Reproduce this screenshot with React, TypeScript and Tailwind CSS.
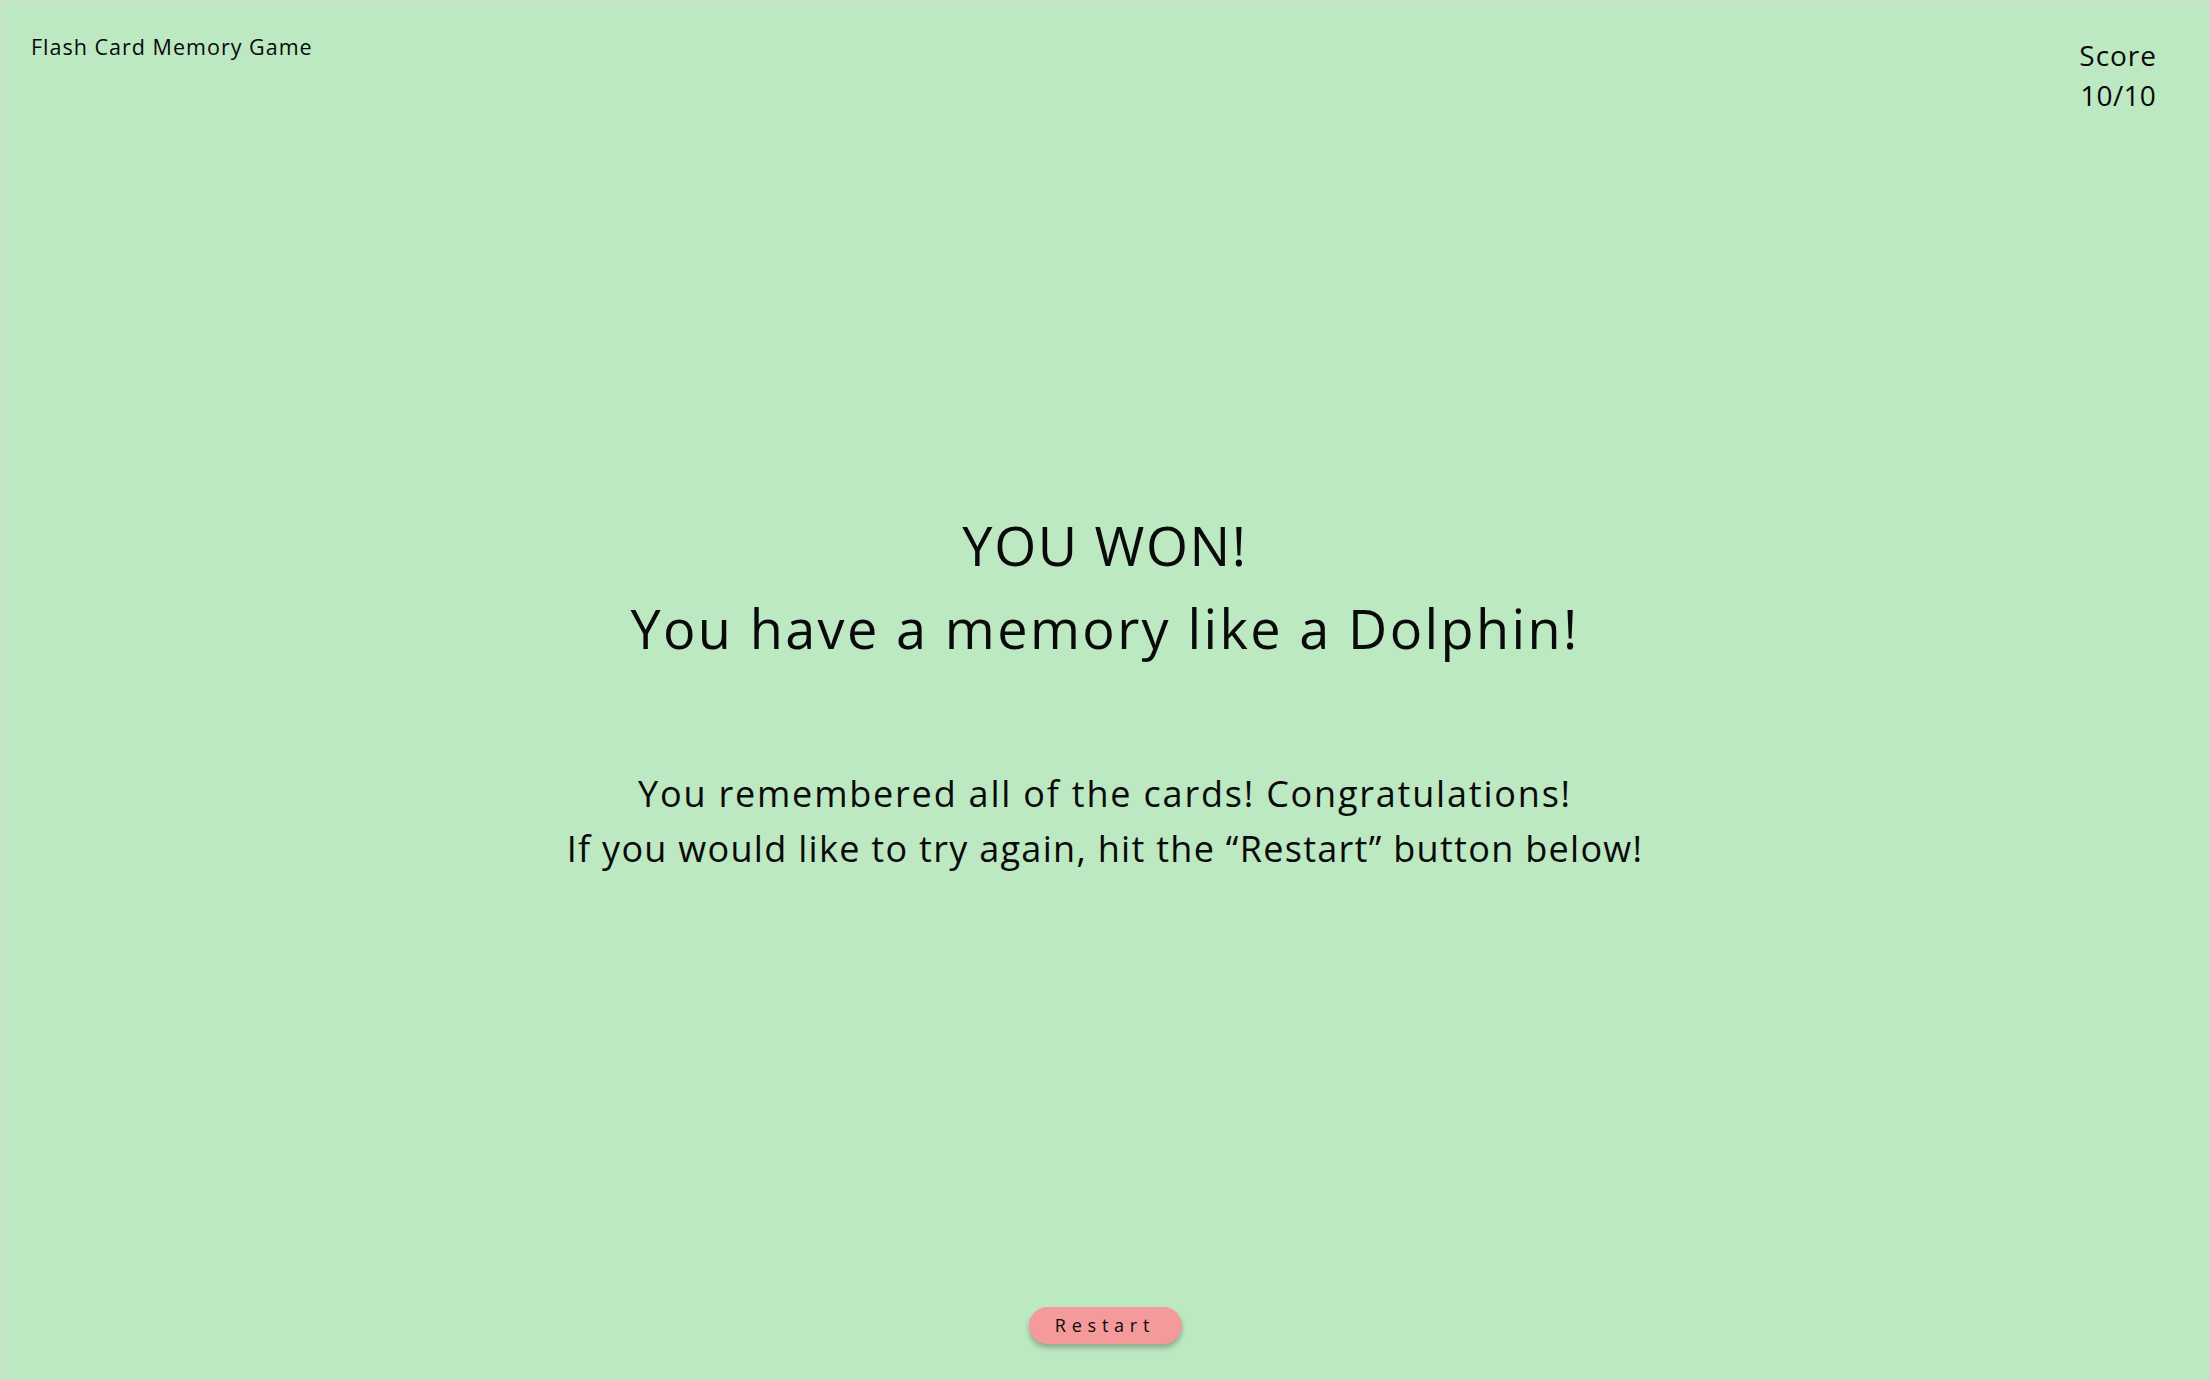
export default function App() {
  return (
    <div
      className="flex h-screen flex-col border border-[#d3dbd4] bg-[#bce8c2] text-[#0a0a0a]"
      style={{ fontFamily: '"Open Sans", "Liberation Sans", sans-serif' }}
    >
      <header className="flex items-start justify-between pl-[30px] pr-[52px] pt-[30px]">
        <h1 className="text-[21.5px] leading-[32px] tracking-[0.047em]">Flash Card Memory Game</h1>
        <div className="pt-[4px] text-center text-[28px] leading-[40px]">
          <div className="tracking-[0.035em]">Score</div>
          <div className="tracking-[0.01em]">10/10</div>
        </div>
      </header>

      <main className="flex flex-1 flex-col items-center justify-center pb-[42px] text-center">
        <h2 className="text-[54px] leading-[83px] tracking-[0.03em]">YOU WON!</h2>
        <h2 className="text-[54px] leading-[83px] tracking-[0.044em]">You have a memory like a Dolphin!</h2>
        <div className="mt-[96px] text-[36px] leading-[55px]">
          <p className="tracking-[0.05em]">You remembered all of the cards! Congratulations!</p>
          <p className="tracking-[0.036em]">If you would like to try again, hit the “Restart” button below!</p>
        </div>
      </main>

      <footer className="flex justify-center pb-[35px]">
        <button className="h-[37px] w-[153px] rounded-full bg-[#f59a9a] text-[18px] tracking-[0.32em] shadow-[0_4px_5px_rgba(0,0,0,0.25)]">
          Restart
        </button>
      </footer>
    </div>
  )
}
